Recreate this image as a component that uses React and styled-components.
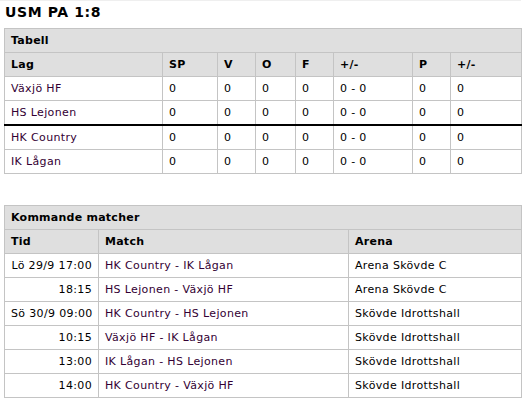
import React from 'react';
import styled, { createGlobalStyle } from 'styled-components';

const GlobalStyle = createGlobalStyle`
  body {
    margin: 0;
    background: #fff;
    font-family: "DejaVu Sans", Verdana, sans-serif;
    font-size: 11px;
    color: #000;
  }
`;

const Page = styled.div`
  width: 521px;
  border-top: 1px solid #efefef;
`;

const Title = styled.h1`
  margin: 0;
  padding: 3px 0 0 5px;
  height: 24px;
  font-size: 14px;
  font-weight: bold;
  line-height: 17px;
  letter-spacing: 0.6px;
`;

const Table = styled.table`
  margin-left: 4px;
  margin-bottom: ${props => props.gap || 0}px;
  width: 517px;
  border-collapse: collapse;
  table-layout: fixed;
`;

const Col = styled.col`
  width: ${props => props.w}px;
`;

const Caption = styled.th`
  background: #dfdfdf;
  border: 1px solid #c4c4c4;
  text-align: left;
  padding: 5px 6px;
  line-height: 13px;
  font-weight: bold;
  letter-spacing: 0.25px;
`;

const Head = styled.th`
  background: #dfdfdf;
  border: 1px solid #c4c4c4;
  text-align: left;
  padding: 5px 6px;
  line-height: 13px;
  font-weight: bold;
  letter-spacing: 0.25px;
`;

const Cell = styled.td`
  border: 1px solid #c4c4c4;
  padding: 5px 6px;
  line-height: 13px;
  letter-spacing: 0.35px;
  text-align: ${props => props.right ? 'right' : 'left'};
  color: ${props => props.team ? '#330033' : '#000'};
  white-space: nowrap;
  overflow: hidden;
`;

const Row = styled.tr`
  & > td {
    border-top: ${props => props.split ? '2px solid #000' : '1px solid #c4c4c4'};
  }
`;

const standingCols = [
  ['Lag', 158], ['SP', 55], ['V', 38], ['O', 40],
  ['F', 38], ['+/-', 79], ['P', 38], ['+/-', 71],
];

const matchCols = [['Tid', 94], ['Match', 250], ['Arena', 173]];

const teams = ['Växjö HF', 'HS Lejonen', 'HK Country', 'IK Lågan'];

const matches = [
  ['Lö 29/9 17:00', 'HK Country - IK Lågan', 'Arena Skövde C'],
  ['18:15', 'HS Lejonen - Växjö HF', 'Arena Skövde C'],
  ['Sö 30/9 09:00', 'HK Country - HS Lejonen', 'Skövde Idrottshall'],
  ['10:15', 'Växjö HF - IK Lågan', 'Skövde Idrottshall'],
  ['13:00', 'IK Lågan - HS Lejonen', 'Skövde Idrottshall'],
  ['14:00', 'HK Country - Växjö HF', 'Skövde Idrottshall'],
];

const App = () => (
  <Page>
    <GlobalStyle />
    <Title>USM PA 1:8</Title>
    <Table gap={31}>
      <colgroup>
        {standingCols.map(([label, w], i) => <Col key={i} w={w} />)}
      </colgroup>
      <thead>
        <tr><Caption colSpan={8}>Tabell</Caption></tr>
        <tr>
          {standingCols.map(([label], i) => <Head key={i}>{label}</Head>)}
        </tr>
      </thead>
      <tbody>
        {teams.map((team, i) => (
          <Row key={team} split={i === 2}>
            <Cell team>{team}</Cell>
            <Cell>0</Cell>
            <Cell>0</Cell>
            <Cell>0</Cell>
            <Cell>0</Cell>
            <Cell>0 - 0</Cell>
            <Cell>0</Cell>
            <Cell>0</Cell>
          </Row>
        ))}
      </tbody>
    </Table>
    <Table>
      <colgroup>
        {matchCols.map(([label, w]) => <Col key={label} w={w} />)}
      </colgroup>
      <thead>
        <tr><Caption colSpan={3}>Kommande matcher</Caption></tr>
        <tr>
          {matchCols.map(([label]) => <Head key={label}>{label}</Head>)}
        </tr>
      </thead>
      <tbody>
        {matches.map(([time, match, arena]) => (
          <Row key={match}>
            <Cell right>{time}</Cell>
            <Cell team>{match}</Cell>
            <Cell>{arena}</Cell>
          </Row>
        ))}
      </tbody>
    </Table>
  </Page>
);

export default App;
